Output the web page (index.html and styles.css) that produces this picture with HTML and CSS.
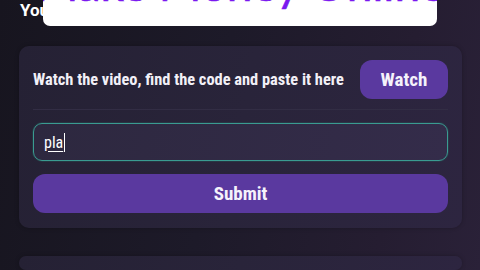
FILE: index.html
```html
<!DOCTYPE html>
<html>
<head>
<meta charset="utf-8">
<link rel="stylesheet" href="styles.css">
</head>
<body>
<header class="header">
  <div class="caption">You</div>
  <div class="overlay"><span class="overlay-text">Make Money Online</span></div>
</header>
<main class="main">
  <section class="card">
    <div class="row">
      <p class="instr">Watch the video, find the code and paste it here</p>
      <button class="btn btn-watch">Watch</button>
    </div>
    <div class="divider"></div>
    <div class="input"><span class="typed">pla</span><span class="caret"></span></div>
    <button class="btn btn-submit">Submit</button>
  </section>
  <section class="card card2"></section>
</main>
</body>
</html>
```
FILE: styles.css
```css
html, body { margin: 0; padding: 0; overflow: hidden; }
body {
  width: 480px;
  height: 270px;
  background: linear-gradient(100deg, #17151f 0%, #1d1a29 45%, #251d31 80%, #2a2138 100%);
  font-family: Roboto, "Noto Sans", sans-serif;
  font-stretch: 75%;
  color: #fff;
}
.header {
  position: relative;
  height: 46px;
}
.caption {
  padding: 3px 0 0 20px;
  font-size: 17px;
  font-stretch: normal;
  font-weight: 700;
  line-height: 14px;
  color: #fff;
}
.overlay {
  position: absolute;
  left: 43px;
  top: -20px;
  width: 394px;
  height: 46px;
  background: #fff;
  border-radius: 7px;
  display: flex;
  justify-content: center;
  align-items: flex-end;
  overflow: hidden;
}
.overlay-text {
  font-family: Lato, "Open Sans", sans-serif;
  font-stretch: normal;
  font-size: 46px;
  line-height: 46px;
  color: #7a18ef;
  position: relative;
  top: -19px;
  white-space: nowrap;
  -webkit-text-stroke: 0.6px #7a18ef;
}
.main {
  padding: 0 18px 0 19px;
}
.card {
  background: linear-gradient(100deg, #252134 0%, #29243a 50%, #2d2540 100%);
  border-radius: 10px;
  padding: 14px 14px 15px 14px;
  box-shadow: 0 0 4px rgba(0,0,0,0.25);
}
.card2 {
  margin-top: 28px;
  height: 14px;
  padding: 0;
}
.row {
  display: flex;
  align-items: center;
  justify-content: space-between;
  height: 39px;
}
.instr {
  margin: 0;
  font-size: 16.4px;
  font-weight: 700;
  color: #f2f0f7;
}
.btn {
  border: none;
  font-family: Roboto, "Noto Sans", sans-serif;
  font-stretch: 75%;
  font-weight: 700;
  font-size: 19px;
  color: #f5f2fb;
  background: #5a399f;
  border-radius: 12px;
  padding: 0;
}
.btn-watch {
  width: 88px;
  height: 39px;
}
.divider {
  height: 1px;
  background: #322d44;
  margin: 10px 0 13px;
}
.input {
  height: 36px;
  border: 1px solid #3a9b91;
  border-radius: 9px;
  background: linear-gradient(100deg, #2d283f 0%, #342c4a 100%);
  display: flex;
  align-items: center;
  padding-left: 10px;
  box-shadow: 0 0 0 1px rgba(40,90,90,0.35);
}
.typed {
  font-size: 16px;
  color: #fff;
  text-decoration: underline;
  text-underline-offset: 3px;
}
.caret {
  width: 1px;
  height: 19px;
  background: #fff;
  margin-left: 1px;
}
.btn-submit {
  display: block;
  width: 100%;
  height: 39px;
  margin-top: 13px;
}
```
